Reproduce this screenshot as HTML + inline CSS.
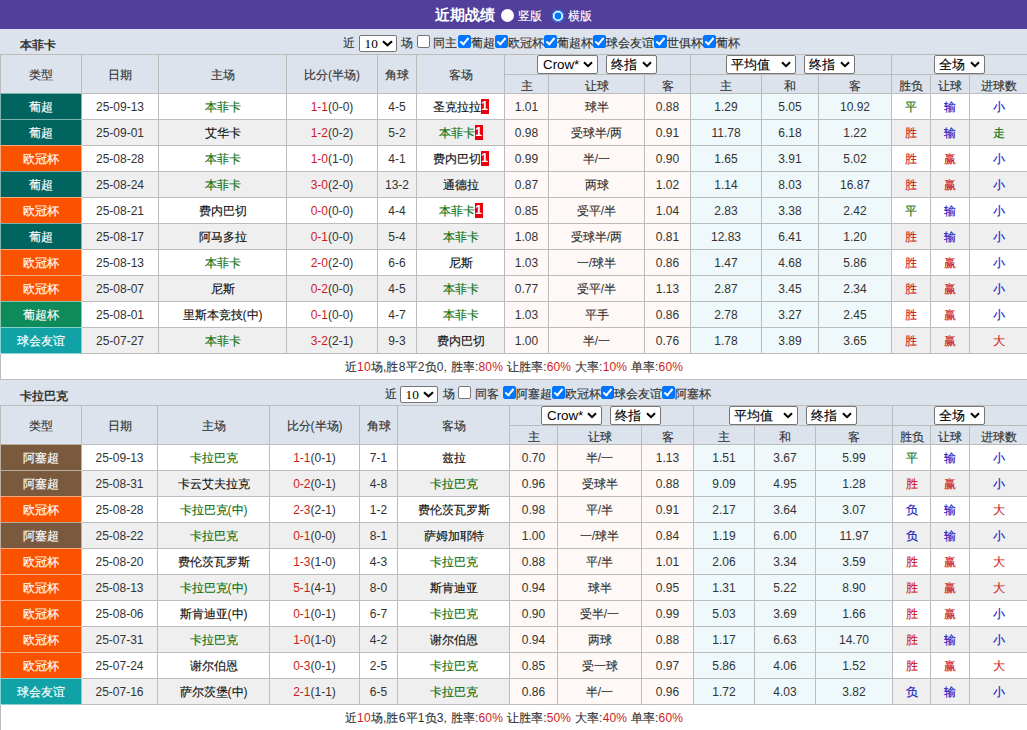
<!DOCTYPE html><html><head><meta charset="utf-8"><style>

html,body{margin:0;padding:0;}
body{width:1027px;height:730px;overflow:hidden;position:relative;background:#dce3ed;font-family:"Liberation Sans",sans-serif;font-size:12px;color:#333;}
.a{position:absolute;box-sizing:border-box;}
.k{-webkit-text-stroke:0.15px currentColor;}
.tname .k,.ttl .k{-webkit-text-stroke:0;}
.c{display:block;text-align:center;line-height:25px;white-space:nowrap;position:relative;top:1px;}
.h{color:#333;}
.tw{color:#fff;}
.tname{font-weight:bold;color:#333;font-size:12px;line-height:14px;}
.ctl{white-space:nowrap;line-height:12px;color:#333;}
.cb{width:13px;height:13px;border:1px solid #767676;border-radius:2px;background:#fff;}
.cb.on{background:#0075ff;border-color:#0075ff;}
.cb.on:after{content:"";position:absolute;left:2.5px;top:-0.5px;width:3px;height:7px;border:solid #fff;border-width:0 2px 2px 0;transform:rotate(40deg);}
.sel10{width:38px;height:17px;border:1px solid #767676;border-radius:2px;background:#fff;color:#000;}
.st10{position:absolute;left:4.5px;top:0.5px;font-family:"Liberation Serif",serif;font-size:13.33px;line-height:14px;}
.chev10{position:absolute;left:21.5px;top:3.5px;}
.sel{position:absolute;height:17px;border:1px solid #767676;border-radius:2px;background:#fff;font-size:13.33px;line-height:15px;color:#000;}
.st{position:absolute;left:5px;top:1px;}
.chev{position:absolute;right:4px;top:4.5px;}
.bd{display:inline-block;background:#e8000b;color:#fff;font-weight:bold;width:8px;height:15px;line-height:15px;text-align:center;vertical-align:1.5px;font-size:12px;}
.top{position:absolute;left:0;top:0;width:1027px;height:29px;background:#523f9c;border-bottom:1px solid #e2ddff;}
.ttl{position:absolute;left:435px;top:6px;color:#fff;font-weight:bold;font-size:15px;line-height:18px;}
.rd{position:absolute;top:9px;width:13px;height:13px;border-radius:50%;background:#fff;}
.rd.on{width:12px;height:12px;top:10px;background:#0075ff;box-shadow:inset 0 0 0 1px #0075ff, inset 0 0 0 2.6px #fff;}
.rt{position:absolute;top:9px;color:#fff;font-size:12px;line-height:14px;}

</style></head><body>
<div class="top"></div><div class="ttl"><span class="k">近期战绩</span></div>
<div class="rd" style="left:501px"></div><div class="rt" style="left:518px"><span class="k">竖版</span></div>
<div class="rd on" style="left:552px"></div><div class="rt" style="left:568px"><span class="k">横版</span></div>
<div class="a tname" style="left:20px;top:38px;"><span class="k">本菲卡</span></div>
<div class="a ctl" style="left:343px;top:37px;"><span class="k">近</span></div>
<div class="a sel10" style="left:359px;top:35px;"><span class="st10">10</span><svg class="chev10" width="12" height="7" viewBox="0 0 12 7"><path d="M1 1.2 L5.5 5.3 L10 1.2" fill="none" stroke="#000" stroke-width="2.1"/></svg></div>
<div class="a ctl" style="left:401px;top:37px;"><span class="k">场</span></div>
<div class="a cb" style="left:417px;top:35px;"></div>
<div class="a ctl" style="left:433px;top:37px;"><span class="k">同主</span></div>
<div class="a cb on" style="left:458px;top:35px;"></div>
<div class="a ctl" style="left:471px;top:37px;"><span class="k">葡超</span></div>
<div class="a cb on" style="left:495px;top:35px;"></div>
<div class="a ctl" style="left:508px;top:37px;"><span class="k">欧冠杯</span></div>
<div class="a cb on" style="left:544px;top:35px;"></div>
<div class="a ctl" style="left:557px;top:37px;"><span class="k">葡超杯</span></div>
<div class="a cb on" style="left:593px;top:35px;"></div>
<div class="a ctl" style="left:606px;top:37px;"><span class="k">球会友谊</span></div>
<div class="a cb on" style="left:654px;top:35px;"></div>
<div class="a ctl" style="left:667px;top:37px;"><span class="k">世俱杯</span></div>
<div class="a cb on" style="left:703px;top:35px;"></div>
<div class="a ctl" style="left:716px;top:37px;"><span class="k">葡杯</span></div>
<div class="a" style="left:0px;top:54px;width:1027px;height:326px;background:#bcbcbc;"></div>
<div class="a" style="left:1px;top:55px;width:80px;height:38px;background:#dce3ed;"><span class="c h" style="line-height:38px;top:1px"><span class="k">类型</span></span></div>
<div class="a" style="left:82px;top:55px;width:76px;height:38px;background:#dce3ed;"><span class="c h" style="line-height:38px;top:1px"><span class="k">日期</span></span></div>
<div class="a" style="left:159px;top:55px;width:127px;height:38px;background:#dce3ed;"><span class="c h" style="line-height:38px;top:1px"><span class="k">主场</span></span></div>
<div class="a" style="left:287px;top:55px;width:90px;height:38px;background:#dce3ed;"><span class="c h" style="line-height:38px;top:1px"><span class="k">比分</span>(<span class="k">半场</span>)</span></div>
<div class="a" style="left:378px;top:55px;width:38px;height:38px;background:#dce3ed;"><span class="c h" style="line-height:38px;top:1px"><span class="k">角球</span></span></div>
<div class="a" style="left:417px;top:55px;width:87px;height:38px;background:#dce3ed;"><span class="c h" style="line-height:38px;top:1px"><span class="k">客场</span></span></div>
<div class="a" style="left:505px;top:55px;width:185px;height:19px;background:#dce3ed;"></div>
<div class="a" style="left:505px;top:75px;width:43px;height:18px;background:#dce3ed;"><span class="c h" style="line-height:18px;top:2px"><span class="k">主</span></span></div>
<div class="a" style="left:549px;top:75px;width:95px;height:18px;background:#dce3ed;"><span class="c h" style="line-height:18px;top:2px"><span class="k">让球</span></span></div>
<div class="a" style="left:645px;top:75px;width:45px;height:18px;background:#dce3ed;"><span class="c h" style="line-height:18px;top:2px"><span class="k">客</span></span></div>
<div class="a" style="left:691px;top:55px;width:200px;height:19px;background:#dce3ed;"></div>
<div class="a" style="left:691px;top:75px;width:70px;height:18px;background:#dce3ed;"><span class="c h" style="line-height:18px;top:2px"><span class="k">主</span></span></div>
<div class="a" style="left:762px;top:75px;width:56px;height:18px;background:#dce3ed;"><span class="c h" style="line-height:18px;top:2px"><span class="k">和</span></span></div>
<div class="a" style="left:819px;top:75px;width:72px;height:18px;background:#dce3ed;"><span class="c h" style="line-height:18px;top:2px"><span class="k">客</span></span></div>
<div class="a" style="left:892px;top:55px;width:136px;height:19px;background:#dce3ed;"></div>
<div class="a" style="left:892px;top:75px;width:38px;height:18px;background:#dce3ed;"><span class="c h" style="line-height:18px;top:2px"><span class="k">胜负</span></span></div>
<div class="a" style="left:931px;top:75px;width:38px;height:18px;background:#dce3ed;"><span class="c h" style="line-height:18px;top:2px"><span class="k">让球</span></span></div>
<div class="a" style="left:970px;top:75px;width:58px;height:18px;background:#dce3ed;"><span class="c h" style="line-height:18px;top:2px"><span class="k">进球数</span></span></div>
<div class="a" style="left:0px;top:93px;width:82px;height:27px;background:#01645f;box-shadow:inset 1px 1px 0 rgba(255,255,255,.5),inset -1px -1px 0 rgba(255,255,255,.5);"><span class="c tw" style="top:2px"><span class="k">葡超</span></span></div>
<div class="a" style="left:82px;top:94px;width:76px;height:25px;background:#ffffff;"><span class="c">25-09-13</span></div>
<div class="a" style="left:159px;top:94px;width:127px;height:25px;background:#ffffff;"><span class="c" style="color:#0d700d"><span class="k">本菲卡</span></span></div>
<div class="a" style="left:417px;top:94px;width:87px;height:25px;background:#ffffff;"><span class="c" style="color:#111"><span class="k">圣克拉拉</span><b class="bd">1</b></span></div>
<div class="a" style="left:287px;top:94px;width:90px;height:25px;background:#ffffff;"><span class="c"><span style="color:#cc1c1c">1-1</span>(0-0)</span></div>
<div class="a" style="left:378px;top:94px;width:38px;height:25px;background:#ffffff;"><span class="c">4-5</span></div>
<div class="a" style="left:505px;top:94px;width:43px;height:25px;background:#fef9f7;"><span class="c">1.01</span></div>
<div class="a" style="left:549px;top:94px;width:95px;height:25px;background:#fef9f7;"><span class="c"><span class="k">球半</span></span></div>
<div class="a" style="left:645px;top:94px;width:45px;height:25px;background:#fef9f7;"><span class="c">0.88</span></div>
<div class="a" style="left:691px;top:94px;width:70px;height:25px;background:#eff8fb;"><span class="c">1.29</span></div>
<div class="a" style="left:762px;top:94px;width:56px;height:25px;background:#eff8fb;"><span class="c">5.05</span></div>
<div class="a" style="left:819px;top:94px;width:72px;height:25px;background:#eff8fb;"><span class="c">10.92</span></div>
<div class="a" style="left:892px;top:94px;width:38px;height:25px;background:#ffffff;"><span class="c" style="color:#0d700d"><span class="k">平</span></span></div>
<div class="a" style="left:931px;top:94px;width:38px;height:25px;background:#ffffff;"><span class="c" style="color:#1414c0"><span class="k">输</span></span></div>
<div class="a" style="left:970px;top:94px;width:58px;height:25px;background:#ffffff;"><span class="c" style="color:#1414c0"><span class="k">小</span></span></div>
<div class="a" style="left:0px;top:119px;width:82px;height:27px;background:#01645f;box-shadow:inset 1px 1px 0 rgba(255,255,255,.5),inset -1px -1px 0 rgba(255,255,255,.5);"><span class="c tw" style="top:2px"><span class="k">葡超</span></span></div>
<div class="a" style="left:82px;top:120px;width:76px;height:25px;background:#efefef;"><span class="c">25-09-01</span></div>
<div class="a" style="left:159px;top:120px;width:127px;height:25px;background:#efefef;"><span class="c" style="color:#111"><span class="k">艾华卡</span></span></div>
<div class="a" style="left:417px;top:120px;width:87px;height:25px;background:#efefef;"><span class="c" style="color:#0d700d"><span class="k">本菲卡</span><b class="bd">1</b></span></div>
<div class="a" style="left:287px;top:120px;width:90px;height:25px;background:#efefef;"><span class="c"><span style="color:#cc1c1c">1-2</span>(0-2)</span></div>
<div class="a" style="left:378px;top:120px;width:38px;height:25px;background:#efefef;"><span class="c">5-2</span></div>
<div class="a" style="left:505px;top:120px;width:43px;height:25px;background:#fef9f7;"><span class="c">0.98</span></div>
<div class="a" style="left:549px;top:120px;width:95px;height:25px;background:#fef9f7;"><span class="c"><span class="k">受球半</span>/<span class="k">两</span></span></div>
<div class="a" style="left:645px;top:120px;width:45px;height:25px;background:#fef9f7;"><span class="c">0.91</span></div>
<div class="a" style="left:691px;top:120px;width:70px;height:25px;background:#eff8fb;"><span class="c">11.78</span></div>
<div class="a" style="left:762px;top:120px;width:56px;height:25px;background:#eff8fb;"><span class="c">6.18</span></div>
<div class="a" style="left:819px;top:120px;width:72px;height:25px;background:#eff8fb;"><span class="c">1.22</span></div>
<div class="a" style="left:892px;top:120px;width:38px;height:25px;background:#efefef;"><span class="c" style="color:#cc1c1c"><span class="k">胜</span></span></div>
<div class="a" style="left:931px;top:120px;width:38px;height:25px;background:#efefef;"><span class="c" style="color:#1414c0"><span class="k">输</span></span></div>
<div class="a" style="left:970px;top:120px;width:58px;height:25px;background:#efefef;"><span class="c" style="color:#0d700d"><span class="k">走</span></span></div>
<div class="a" style="left:0px;top:145px;width:82px;height:27px;background:#fb5200;box-shadow:inset 1px 1px 0 rgba(255,255,255,.5),inset -1px -1px 0 rgba(255,255,255,.5);"><span class="c tw" style="top:2px"><span class="k">欧冠杯</span></span></div>
<div class="a" style="left:82px;top:146px;width:76px;height:25px;background:#ffffff;"><span class="c">25-08-28</span></div>
<div class="a" style="left:159px;top:146px;width:127px;height:25px;background:#ffffff;"><span class="c" style="color:#0d700d"><span class="k">本菲卡</span></span></div>
<div class="a" style="left:417px;top:146px;width:87px;height:25px;background:#ffffff;"><span class="c" style="color:#111"><span class="k">费内巴切</span><b class="bd">1</b></span></div>
<div class="a" style="left:287px;top:146px;width:90px;height:25px;background:#ffffff;"><span class="c"><span style="color:#cc1c1c">1-0</span>(1-0)</span></div>
<div class="a" style="left:378px;top:146px;width:38px;height:25px;background:#ffffff;"><span class="c">4-1</span></div>
<div class="a" style="left:505px;top:146px;width:43px;height:25px;background:#fef9f7;"><span class="c">0.99</span></div>
<div class="a" style="left:549px;top:146px;width:95px;height:25px;background:#fef9f7;"><span class="c"><span class="k">半</span>/<span class="k">一</span></span></div>
<div class="a" style="left:645px;top:146px;width:45px;height:25px;background:#fef9f7;"><span class="c">0.90</span></div>
<div class="a" style="left:691px;top:146px;width:70px;height:25px;background:#eff8fb;"><span class="c">1.65</span></div>
<div class="a" style="left:762px;top:146px;width:56px;height:25px;background:#eff8fb;"><span class="c">3.91</span></div>
<div class="a" style="left:819px;top:146px;width:72px;height:25px;background:#eff8fb;"><span class="c">5.02</span></div>
<div class="a" style="left:892px;top:146px;width:38px;height:25px;background:#ffffff;"><span class="c" style="color:#cc1c1c"><span class="k">胜</span></span></div>
<div class="a" style="left:931px;top:146px;width:38px;height:25px;background:#ffffff;"><span class="c" style="color:#cc1c1c"><span class="k">赢</span></span></div>
<div class="a" style="left:970px;top:146px;width:58px;height:25px;background:#ffffff;"><span class="c" style="color:#1414c0"><span class="k">小</span></span></div>
<div class="a" style="left:0px;top:171px;width:82px;height:27px;background:#01645f;box-shadow:inset 1px 1px 0 rgba(255,255,255,.5),inset -1px -1px 0 rgba(255,255,255,.5);"><span class="c tw" style="top:2px"><span class="k">葡超</span></span></div>
<div class="a" style="left:82px;top:172px;width:76px;height:25px;background:#efefef;"><span class="c">25-08-24</span></div>
<div class="a" style="left:159px;top:172px;width:127px;height:25px;background:#efefef;"><span class="c" style="color:#0d700d"><span class="k">本菲卡</span></span></div>
<div class="a" style="left:417px;top:172px;width:87px;height:25px;background:#efefef;"><span class="c" style="color:#111"><span class="k">通德拉</span></span></div>
<div class="a" style="left:287px;top:172px;width:90px;height:25px;background:#efefef;"><span class="c"><span style="color:#cc1c1c">3-0</span>(2-0)</span></div>
<div class="a" style="left:378px;top:172px;width:38px;height:25px;background:#efefef;"><span class="c">13-2</span></div>
<div class="a" style="left:505px;top:172px;width:43px;height:25px;background:#fef9f7;"><span class="c">0.87</span></div>
<div class="a" style="left:549px;top:172px;width:95px;height:25px;background:#fef9f7;"><span class="c"><span class="k">两球</span></span></div>
<div class="a" style="left:645px;top:172px;width:45px;height:25px;background:#fef9f7;"><span class="c">1.02</span></div>
<div class="a" style="left:691px;top:172px;width:70px;height:25px;background:#eff8fb;"><span class="c">1.14</span></div>
<div class="a" style="left:762px;top:172px;width:56px;height:25px;background:#eff8fb;"><span class="c">8.03</span></div>
<div class="a" style="left:819px;top:172px;width:72px;height:25px;background:#eff8fb;"><span class="c">16.87</span></div>
<div class="a" style="left:892px;top:172px;width:38px;height:25px;background:#efefef;"><span class="c" style="color:#cc1c1c"><span class="k">胜</span></span></div>
<div class="a" style="left:931px;top:172px;width:38px;height:25px;background:#efefef;"><span class="c" style="color:#cc1c1c"><span class="k">赢</span></span></div>
<div class="a" style="left:970px;top:172px;width:58px;height:25px;background:#efefef;"><span class="c" style="color:#1414c0"><span class="k">小</span></span></div>
<div class="a" style="left:0px;top:197px;width:82px;height:27px;background:#fb5200;box-shadow:inset 1px 1px 0 rgba(255,255,255,.5),inset -1px -1px 0 rgba(255,255,255,.5);"><span class="c tw" style="top:2px"><span class="k">欧冠杯</span></span></div>
<div class="a" style="left:82px;top:198px;width:76px;height:25px;background:#ffffff;"><span class="c">25-08-21</span></div>
<div class="a" style="left:159px;top:198px;width:127px;height:25px;background:#ffffff;"><span class="c" style="color:#111"><span class="k">费内巴切</span></span></div>
<div class="a" style="left:417px;top:198px;width:87px;height:25px;background:#ffffff;"><span class="c" style="color:#0d700d"><span class="k">本菲卡</span><b class="bd">1</b></span></div>
<div class="a" style="left:287px;top:198px;width:90px;height:25px;background:#ffffff;"><span class="c"><span style="color:#cc1c1c">0-0</span>(0-0)</span></div>
<div class="a" style="left:378px;top:198px;width:38px;height:25px;background:#ffffff;"><span class="c">4-4</span></div>
<div class="a" style="left:505px;top:198px;width:43px;height:25px;background:#fef9f7;"><span class="c">0.85</span></div>
<div class="a" style="left:549px;top:198px;width:95px;height:25px;background:#fef9f7;"><span class="c"><span class="k">受平</span>/<span class="k">半</span></span></div>
<div class="a" style="left:645px;top:198px;width:45px;height:25px;background:#fef9f7;"><span class="c">1.04</span></div>
<div class="a" style="left:691px;top:198px;width:70px;height:25px;background:#eff8fb;"><span class="c">2.83</span></div>
<div class="a" style="left:762px;top:198px;width:56px;height:25px;background:#eff8fb;"><span class="c">3.38</span></div>
<div class="a" style="left:819px;top:198px;width:72px;height:25px;background:#eff8fb;"><span class="c">2.42</span></div>
<div class="a" style="left:892px;top:198px;width:38px;height:25px;background:#ffffff;"><span class="c" style="color:#0d700d"><span class="k">平</span></span></div>
<div class="a" style="left:931px;top:198px;width:38px;height:25px;background:#ffffff;"><span class="c" style="color:#1414c0"><span class="k">输</span></span></div>
<div class="a" style="left:970px;top:198px;width:58px;height:25px;background:#ffffff;"><span class="c" style="color:#1414c0"><span class="k">小</span></span></div>
<div class="a" style="left:0px;top:223px;width:82px;height:27px;background:#01645f;box-shadow:inset 1px 1px 0 rgba(255,255,255,.5),inset -1px -1px 0 rgba(255,255,255,.5);"><span class="c tw" style="top:2px"><span class="k">葡超</span></span></div>
<div class="a" style="left:82px;top:224px;width:76px;height:25px;background:#efefef;"><span class="c">25-08-17</span></div>
<div class="a" style="left:159px;top:224px;width:127px;height:25px;background:#efefef;"><span class="c" style="color:#111"><span class="k">阿马多拉</span></span></div>
<div class="a" style="left:417px;top:224px;width:87px;height:25px;background:#efefef;"><span class="c" style="color:#0d700d"><span class="k">本菲卡</span></span></div>
<div class="a" style="left:287px;top:224px;width:90px;height:25px;background:#efefef;"><span class="c"><span style="color:#cc1c1c">0-1</span>(0-0)</span></div>
<div class="a" style="left:378px;top:224px;width:38px;height:25px;background:#efefef;"><span class="c">5-4</span></div>
<div class="a" style="left:505px;top:224px;width:43px;height:25px;background:#fef9f7;"><span class="c">1.08</span></div>
<div class="a" style="left:549px;top:224px;width:95px;height:25px;background:#fef9f7;"><span class="c"><span class="k">受球半</span>/<span class="k">两</span></span></div>
<div class="a" style="left:645px;top:224px;width:45px;height:25px;background:#fef9f7;"><span class="c">0.81</span></div>
<div class="a" style="left:691px;top:224px;width:70px;height:25px;background:#eff8fb;"><span class="c">12.83</span></div>
<div class="a" style="left:762px;top:224px;width:56px;height:25px;background:#eff8fb;"><span class="c">6.41</span></div>
<div class="a" style="left:819px;top:224px;width:72px;height:25px;background:#eff8fb;"><span class="c">1.20</span></div>
<div class="a" style="left:892px;top:224px;width:38px;height:25px;background:#efefef;"><span class="c" style="color:#cc1c1c"><span class="k">胜</span></span></div>
<div class="a" style="left:931px;top:224px;width:38px;height:25px;background:#efefef;"><span class="c" style="color:#1414c0"><span class="k">输</span></span></div>
<div class="a" style="left:970px;top:224px;width:58px;height:25px;background:#efefef;"><span class="c" style="color:#1414c0"><span class="k">小</span></span></div>
<div class="a" style="left:0px;top:249px;width:82px;height:27px;background:#fb5200;box-shadow:inset 1px 1px 0 rgba(255,255,255,.5),inset -1px -1px 0 rgba(255,255,255,.5);"><span class="c tw" style="top:2px"><span class="k">欧冠杯</span></span></div>
<div class="a" style="left:82px;top:250px;width:76px;height:25px;background:#ffffff;"><span class="c">25-08-13</span></div>
<div class="a" style="left:159px;top:250px;width:127px;height:25px;background:#ffffff;"><span class="c" style="color:#0d700d"><span class="k">本菲卡</span></span></div>
<div class="a" style="left:417px;top:250px;width:87px;height:25px;background:#ffffff;"><span class="c" style="color:#111"><span class="k">尼斯</span></span></div>
<div class="a" style="left:287px;top:250px;width:90px;height:25px;background:#ffffff;"><span class="c"><span style="color:#cc1c1c">2-0</span>(2-0)</span></div>
<div class="a" style="left:378px;top:250px;width:38px;height:25px;background:#ffffff;"><span class="c">6-6</span></div>
<div class="a" style="left:505px;top:250px;width:43px;height:25px;background:#fef9f7;"><span class="c">1.03</span></div>
<div class="a" style="left:549px;top:250px;width:95px;height:25px;background:#fef9f7;"><span class="c"><span class="k">一</span>/<span class="k">球半</span></span></div>
<div class="a" style="left:645px;top:250px;width:45px;height:25px;background:#fef9f7;"><span class="c">0.86</span></div>
<div class="a" style="left:691px;top:250px;width:70px;height:25px;background:#eff8fb;"><span class="c">1.47</span></div>
<div class="a" style="left:762px;top:250px;width:56px;height:25px;background:#eff8fb;"><span class="c">4.68</span></div>
<div class="a" style="left:819px;top:250px;width:72px;height:25px;background:#eff8fb;"><span class="c">5.86</span></div>
<div class="a" style="left:892px;top:250px;width:38px;height:25px;background:#ffffff;"><span class="c" style="color:#cc1c1c"><span class="k">胜</span></span></div>
<div class="a" style="left:931px;top:250px;width:38px;height:25px;background:#ffffff;"><span class="c" style="color:#cc1c1c"><span class="k">赢</span></span></div>
<div class="a" style="left:970px;top:250px;width:58px;height:25px;background:#ffffff;"><span class="c" style="color:#1414c0"><span class="k">小</span></span></div>
<div class="a" style="left:0px;top:275px;width:82px;height:27px;background:#fb5200;box-shadow:inset 1px 1px 0 rgba(255,255,255,.5),inset -1px -1px 0 rgba(255,255,255,.5);"><span class="c tw" style="top:2px"><span class="k">欧冠杯</span></span></div>
<div class="a" style="left:82px;top:276px;width:76px;height:25px;background:#efefef;"><span class="c">25-08-07</span></div>
<div class="a" style="left:159px;top:276px;width:127px;height:25px;background:#efefef;"><span class="c" style="color:#111"><span class="k">尼斯</span></span></div>
<div class="a" style="left:417px;top:276px;width:87px;height:25px;background:#efefef;"><span class="c" style="color:#0d700d"><span class="k">本菲卡</span></span></div>
<div class="a" style="left:287px;top:276px;width:90px;height:25px;background:#efefef;"><span class="c"><span style="color:#cc1c1c">0-2</span>(0-0)</span></div>
<div class="a" style="left:378px;top:276px;width:38px;height:25px;background:#efefef;"><span class="c">4-5</span></div>
<div class="a" style="left:505px;top:276px;width:43px;height:25px;background:#fef9f7;"><span class="c">0.77</span></div>
<div class="a" style="left:549px;top:276px;width:95px;height:25px;background:#fef9f7;"><span class="c"><span class="k">受平</span>/<span class="k">半</span></span></div>
<div class="a" style="left:645px;top:276px;width:45px;height:25px;background:#fef9f7;"><span class="c">1.13</span></div>
<div class="a" style="left:691px;top:276px;width:70px;height:25px;background:#eff8fb;"><span class="c">2.87</span></div>
<div class="a" style="left:762px;top:276px;width:56px;height:25px;background:#eff8fb;"><span class="c">3.45</span></div>
<div class="a" style="left:819px;top:276px;width:72px;height:25px;background:#eff8fb;"><span class="c">2.34</span></div>
<div class="a" style="left:892px;top:276px;width:38px;height:25px;background:#efefef;"><span class="c" style="color:#cc1c1c"><span class="k">胜</span></span></div>
<div class="a" style="left:931px;top:276px;width:38px;height:25px;background:#efefef;"><span class="c" style="color:#cc1c1c"><span class="k">赢</span></span></div>
<div class="a" style="left:970px;top:276px;width:58px;height:25px;background:#efefef;"><span class="c" style="color:#1414c0"><span class="k">小</span></span></div>
<div class="a" style="left:0px;top:301px;width:82px;height:27px;background:#0f8a5a;box-shadow:inset 1px 1px 0 rgba(255,255,255,.5),inset -1px -1px 0 rgba(255,255,255,.5);"><span class="c tw" style="top:2px"><span class="k">葡超杯</span></span></div>
<div class="a" style="left:82px;top:302px;width:76px;height:25px;background:#ffffff;"><span class="c">25-08-01</span></div>
<div class="a" style="left:159px;top:302px;width:127px;height:25px;background:#ffffff;"><span class="c" style="color:#111"><span class="k">里斯本竞技</span>(<span class="k">中</span>)</span></div>
<div class="a" style="left:417px;top:302px;width:87px;height:25px;background:#ffffff;"><span class="c" style="color:#0d700d"><span class="k">本菲卡</span></span></div>
<div class="a" style="left:287px;top:302px;width:90px;height:25px;background:#ffffff;"><span class="c"><span style="color:#cc1c1c">0-1</span>(0-0)</span></div>
<div class="a" style="left:378px;top:302px;width:38px;height:25px;background:#ffffff;"><span class="c">4-7</span></div>
<div class="a" style="left:505px;top:302px;width:43px;height:25px;background:#fef9f7;"><span class="c">1.03</span></div>
<div class="a" style="left:549px;top:302px;width:95px;height:25px;background:#fef9f7;"><span class="c"><span class="k">平手</span></span></div>
<div class="a" style="left:645px;top:302px;width:45px;height:25px;background:#fef9f7;"><span class="c">0.86</span></div>
<div class="a" style="left:691px;top:302px;width:70px;height:25px;background:#eff8fb;"><span class="c">2.78</span></div>
<div class="a" style="left:762px;top:302px;width:56px;height:25px;background:#eff8fb;"><span class="c">3.27</span></div>
<div class="a" style="left:819px;top:302px;width:72px;height:25px;background:#eff8fb;"><span class="c">2.45</span></div>
<div class="a" style="left:892px;top:302px;width:38px;height:25px;background:#ffffff;"><span class="c" style="color:#cc1c1c"><span class="k">胜</span></span></div>
<div class="a" style="left:931px;top:302px;width:38px;height:25px;background:#ffffff;"><span class="c" style="color:#cc1c1c"><span class="k">赢</span></span></div>
<div class="a" style="left:970px;top:302px;width:58px;height:25px;background:#ffffff;"><span class="c" style="color:#1414c0"><span class="k">小</span></span></div>
<div class="a" style="left:0px;top:327px;width:82px;height:27px;background:#10a2a6;box-shadow:inset 1px 1px 0 rgba(255,255,255,.5),inset -1px -1px 0 rgba(255,255,255,.5);"><span class="c tw" style="top:2px"><span class="k">球会友谊</span></span></div>
<div class="a" style="left:82px;top:328px;width:76px;height:25px;background:#efefef;"><span class="c">25-07-27</span></div>
<div class="a" style="left:159px;top:328px;width:127px;height:25px;background:#efefef;"><span class="c" style="color:#0d700d"><span class="k">本菲卡</span></span></div>
<div class="a" style="left:417px;top:328px;width:87px;height:25px;background:#efefef;"><span class="c" style="color:#111"><span class="k">费内巴切</span></span></div>
<div class="a" style="left:287px;top:328px;width:90px;height:25px;background:#efefef;"><span class="c"><span style="color:#cc1c1c">3-2</span>(2-1)</span></div>
<div class="a" style="left:378px;top:328px;width:38px;height:25px;background:#efefef;"><span class="c">9-3</span></div>
<div class="a" style="left:505px;top:328px;width:43px;height:25px;background:#fef9f7;"><span class="c">1.00</span></div>
<div class="a" style="left:549px;top:328px;width:95px;height:25px;background:#fef9f7;"><span class="c"><span class="k">半</span>/<span class="k">一</span></span></div>
<div class="a" style="left:645px;top:328px;width:45px;height:25px;background:#fef9f7;"><span class="c">0.76</span></div>
<div class="a" style="left:691px;top:328px;width:70px;height:25px;background:#eff8fb;"><span class="c">1.78</span></div>
<div class="a" style="left:762px;top:328px;width:56px;height:25px;background:#eff8fb;"><span class="c">3.89</span></div>
<div class="a" style="left:819px;top:328px;width:72px;height:25px;background:#eff8fb;"><span class="c">3.65</span></div>
<div class="a" style="left:892px;top:328px;width:38px;height:25px;background:#efefef;"><span class="c" style="color:#cc1c1c"><span class="k">胜</span></span></div>
<div class="a" style="left:931px;top:328px;width:38px;height:25px;background:#efefef;"><span class="c" style="color:#cc1c1c"><span class="k">赢</span></span></div>
<div class="a" style="left:970px;top:328px;width:58px;height:25px;background:#efefef;"><span class="c" style="color:#cc1c1c"><span class="k">大</span></span></div>
<div class="a" style="left:1px;top:354px;width:1026px;height:25px;background:#ffffff;"><span class="c" style="letter-spacing:0.18px"><span class="k">近</span><span style="color:#cc1c1c">10</span><span class="k">场</span>,<span class="k">胜</span>8<span class="k">平</span>2<span class="k">负</span>0, <span class="k">胜率</span>:<span style="color:#cc1c1c">80%</span> <span class="k">让胜率</span>:<span style="color:#cc1c1c">60%</span> <span class="k">大率</span>:<span style="color:#cc1c1c">10%</span> <span class="k">单率</span>:<span style="color:#cc1c1c">60%</span></span></div>
<div class="a tname" style="left:20px;top:389px;"><span class="k">卡拉巴克</span></div>
<div class="a ctl" style="left:385px;top:388px;"><span class="k">近</span></div>
<div class="a sel10" style="left:400px;top:386px;"><span class="st10">10</span><svg class="chev10" width="12" height="7" viewBox="0 0 12 7"><path d="M1 1.2 L5.5 5.3 L10 1.2" fill="none" stroke="#000" stroke-width="2.1"/></svg></div>
<div class="a ctl" style="left:443px;top:388px;"><span class="k">场</span></div>
<div class="a cb" style="left:458px;top:386px;"></div>
<div class="a ctl" style="left:475px;top:388px;"><span class="k">同客</span></div>
<div class="a cb on" style="left:503px;top:386px;"></div>
<div class="a ctl" style="left:516px;top:388px;"><span class="k">阿塞超</span></div>
<div class="a cb on" style="left:552px;top:386px;"></div>
<div class="a ctl" style="left:565px;top:388px;"><span class="k">欧冠杯</span></div>
<div class="a cb on" style="left:601px;top:386px;"></div>
<div class="a ctl" style="left:614px;top:388px;"><span class="k">球会友谊</span></div>
<div class="a cb on" style="left:662px;top:386px;"></div>
<div class="a ctl" style="left:675px;top:388px;"><span class="k">阿塞杯</span></div>
<div class="a" style="left:0px;top:405px;width:1027px;height:326px;background:#bcbcbc;"></div>
<div class="a" style="left:1px;top:406px;width:80px;height:38px;background:#dce3ed;"><span class="c h" style="line-height:38px;top:1px"><span class="k">类型</span></span></div>
<div class="a" style="left:82px;top:406px;width:75px;height:38px;background:#dce3ed;"><span class="c h" style="line-height:38px;top:1px"><span class="k">日期</span></span></div>
<div class="a" style="left:158px;top:406px;width:111px;height:38px;background:#dce3ed;"><span class="c h" style="line-height:38px;top:1px"><span class="k">主场</span></span></div>
<div class="a" style="left:270px;top:406px;width:89px;height:38px;background:#dce3ed;"><span class="c h" style="line-height:38px;top:1px"><span class="k">比分</span>(<span class="k">半场</span>)</span></div>
<div class="a" style="left:360px;top:406px;width:37px;height:38px;background:#dce3ed;"><span class="c h" style="line-height:38px;top:1px"><span class="k">角球</span></span></div>
<div class="a" style="left:398px;top:406px;width:111px;height:38px;background:#dce3ed;"><span class="c h" style="line-height:38px;top:1px"><span class="k">客场</span></span></div>
<div class="a" style="left:510px;top:406px;width:183px;height:19px;background:#dce3ed;"></div>
<div class="a" style="left:510px;top:426px;width:47px;height:18px;background:#dce3ed;"><span class="c h" style="line-height:18px;top:2px"><span class="k">主</span></span></div>
<div class="a" style="left:558px;top:426px;width:83px;height:18px;background:#dce3ed;"><span class="c h" style="line-height:18px;top:2px"><span class="k">让球</span></span></div>
<div class="a" style="left:642px;top:426px;width:51px;height:18px;background:#dce3ed;"><span class="c h" style="line-height:18px;top:2px"><span class="k">客</span></span></div>
<div class="a" style="left:694px;top:406px;width:198px;height:19px;background:#dce3ed;"></div>
<div class="a" style="left:694px;top:426px;width:60px;height:18px;background:#dce3ed;"><span class="c h" style="line-height:18px;top:2px"><span class="k">主</span></span></div>
<div class="a" style="left:755px;top:426px;width:60px;height:18px;background:#dce3ed;"><span class="c h" style="line-height:18px;top:2px"><span class="k">和</span></span></div>
<div class="a" style="left:816px;top:426px;width:76px;height:18px;background:#dce3ed;"><span class="c h" style="line-height:18px;top:2px"><span class="k">客</span></span></div>
<div class="a" style="left:893px;top:406px;width:135px;height:19px;background:#dce3ed;"></div>
<div class="a" style="left:893px;top:426px;width:37px;height:18px;background:#dce3ed;"><span class="c h" style="line-height:18px;top:2px"><span class="k">胜负</span></span></div>
<div class="a" style="left:931px;top:426px;width:38px;height:18px;background:#dce3ed;"><span class="c h" style="line-height:18px;top:2px"><span class="k">让球</span></span></div>
<div class="a" style="left:970px;top:426px;width:58px;height:18px;background:#dce3ed;"><span class="c h" style="line-height:18px;top:2px"><span class="k">进球数</span></span></div>
<div class="a" style="left:0px;top:444px;width:82px;height:27px;background:#7a5a3e;box-shadow:inset 1px 1px 0 rgba(255,255,255,.5),inset -1px -1px 0 rgba(255,255,255,.5);"><span class="c tw" style="top:2px"><span class="k">阿塞超</span></span></div>
<div class="a" style="left:82px;top:445px;width:75px;height:25px;background:#ffffff;"><span class="c">25-09-13</span></div>
<div class="a" style="left:158px;top:445px;width:111px;height:25px;background:#ffffff;"><span class="c" style="color:#0d700d"><span class="k">卡拉巴克</span></span></div>
<div class="a" style="left:398px;top:445px;width:111px;height:25px;background:#ffffff;"><span class="c" style="color:#111"><span class="k">兹拉</span></span></div>
<div class="a" style="left:270px;top:445px;width:89px;height:25px;background:#ffffff;"><span class="c"><span style="color:#cc1c1c">1-1</span>(0-1)</span></div>
<div class="a" style="left:360px;top:445px;width:37px;height:25px;background:#ffffff;"><span class="c">7-1</span></div>
<div class="a" style="left:510px;top:445px;width:47px;height:25px;background:#fef9f7;"><span class="c">0.70</span></div>
<div class="a" style="left:558px;top:445px;width:83px;height:25px;background:#fef9f7;"><span class="c"><span class="k">半</span>/<span class="k">一</span></span></div>
<div class="a" style="left:642px;top:445px;width:51px;height:25px;background:#fef9f7;"><span class="c">1.13</span></div>
<div class="a" style="left:694px;top:445px;width:60px;height:25px;background:#eff8fb;"><span class="c">1.51</span></div>
<div class="a" style="left:755px;top:445px;width:60px;height:25px;background:#eff8fb;"><span class="c">3.67</span></div>
<div class="a" style="left:816px;top:445px;width:76px;height:25px;background:#eff8fb;"><span class="c">5.99</span></div>
<div class="a" style="left:893px;top:445px;width:37px;height:25px;background:#ffffff;"><span class="c" style="color:#0d700d"><span class="k">平</span></span></div>
<div class="a" style="left:931px;top:445px;width:38px;height:25px;background:#ffffff;"><span class="c" style="color:#1414c0"><span class="k">输</span></span></div>
<div class="a" style="left:970px;top:445px;width:58px;height:25px;background:#ffffff;"><span class="c" style="color:#1414c0"><span class="k">小</span></span></div>
<div class="a" style="left:0px;top:470px;width:82px;height:27px;background:#7a5a3e;box-shadow:inset 1px 1px 0 rgba(255,255,255,.5),inset -1px -1px 0 rgba(255,255,255,.5);"><span class="c tw" style="top:2px"><span class="k">阿塞超</span></span></div>
<div class="a" style="left:82px;top:471px;width:75px;height:25px;background:#efefef;"><span class="c">25-08-31</span></div>
<div class="a" style="left:158px;top:471px;width:111px;height:25px;background:#efefef;"><span class="c" style="color:#111"><span class="k">卡云艾夫拉克</span></span></div>
<div class="a" style="left:398px;top:471px;width:111px;height:25px;background:#efefef;"><span class="c" style="color:#0d700d"><span class="k">卡拉巴克</span></span></div>
<div class="a" style="left:270px;top:471px;width:89px;height:25px;background:#efefef;"><span class="c"><span style="color:#cc1c1c">0-2</span>(0-1)</span></div>
<div class="a" style="left:360px;top:471px;width:37px;height:25px;background:#efefef;"><span class="c">4-8</span></div>
<div class="a" style="left:510px;top:471px;width:47px;height:25px;background:#fef9f7;"><span class="c">0.96</span></div>
<div class="a" style="left:558px;top:471px;width:83px;height:25px;background:#fef9f7;"><span class="c"><span class="k">受球半</span></span></div>
<div class="a" style="left:642px;top:471px;width:51px;height:25px;background:#fef9f7;"><span class="c">0.88</span></div>
<div class="a" style="left:694px;top:471px;width:60px;height:25px;background:#eff8fb;"><span class="c">9.09</span></div>
<div class="a" style="left:755px;top:471px;width:60px;height:25px;background:#eff8fb;"><span class="c">4.95</span></div>
<div class="a" style="left:816px;top:471px;width:76px;height:25px;background:#eff8fb;"><span class="c">1.28</span></div>
<div class="a" style="left:893px;top:471px;width:37px;height:25px;background:#efefef;"><span class="c" style="color:#cc1c1c"><span class="k">胜</span></span></div>
<div class="a" style="left:931px;top:471px;width:38px;height:25px;background:#efefef;"><span class="c" style="color:#cc1c1c"><span class="k">赢</span></span></div>
<div class="a" style="left:970px;top:471px;width:58px;height:25px;background:#efefef;"><span class="c" style="color:#1414c0"><span class="k">小</span></span></div>
<div class="a" style="left:0px;top:496px;width:82px;height:27px;background:#fb5200;box-shadow:inset 1px 1px 0 rgba(255,255,255,.5),inset -1px -1px 0 rgba(255,255,255,.5);"><span class="c tw" style="top:2px"><span class="k">欧冠杯</span></span></div>
<div class="a" style="left:82px;top:497px;width:75px;height:25px;background:#ffffff;"><span class="c">25-08-28</span></div>
<div class="a" style="left:158px;top:497px;width:111px;height:25px;background:#ffffff;"><span class="c" style="color:#0d700d"><span class="k">卡拉巴克</span>(<span class="k">中</span>)</span></div>
<div class="a" style="left:398px;top:497px;width:111px;height:25px;background:#ffffff;"><span class="c" style="color:#111"><span class="k">费伦茨瓦罗斯</span></span></div>
<div class="a" style="left:270px;top:497px;width:89px;height:25px;background:#ffffff;"><span class="c"><span style="color:#cc1c1c">2-3</span>(2-1)</span></div>
<div class="a" style="left:360px;top:497px;width:37px;height:25px;background:#ffffff;"><span class="c">1-2</span></div>
<div class="a" style="left:510px;top:497px;width:47px;height:25px;background:#fef9f7;"><span class="c">0.98</span></div>
<div class="a" style="left:558px;top:497px;width:83px;height:25px;background:#fef9f7;"><span class="c"><span class="k">平</span>/<span class="k">半</span></span></div>
<div class="a" style="left:642px;top:497px;width:51px;height:25px;background:#fef9f7;"><span class="c">0.91</span></div>
<div class="a" style="left:694px;top:497px;width:60px;height:25px;background:#eff8fb;"><span class="c">2.17</span></div>
<div class="a" style="left:755px;top:497px;width:60px;height:25px;background:#eff8fb;"><span class="c">3.64</span></div>
<div class="a" style="left:816px;top:497px;width:76px;height:25px;background:#eff8fb;"><span class="c">3.07</span></div>
<div class="a" style="left:893px;top:497px;width:37px;height:25px;background:#ffffff;"><span class="c" style="color:#1414c0"><span class="k">负</span></span></div>
<div class="a" style="left:931px;top:497px;width:38px;height:25px;background:#ffffff;"><span class="c" style="color:#1414c0"><span class="k">输</span></span></div>
<div class="a" style="left:970px;top:497px;width:58px;height:25px;background:#ffffff;"><span class="c" style="color:#cc1c1c"><span class="k">大</span></span></div>
<div class="a" style="left:0px;top:522px;width:82px;height:27px;background:#7a5a3e;box-shadow:inset 1px 1px 0 rgba(255,255,255,.5),inset -1px -1px 0 rgba(255,255,255,.5);"><span class="c tw" style="top:2px"><span class="k">阿塞超</span></span></div>
<div class="a" style="left:82px;top:523px;width:75px;height:25px;background:#efefef;"><span class="c">25-08-22</span></div>
<div class="a" style="left:158px;top:523px;width:111px;height:25px;background:#efefef;"><span class="c" style="color:#0d700d"><span class="k">卡拉巴克</span></span></div>
<div class="a" style="left:398px;top:523px;width:111px;height:25px;background:#efefef;"><span class="c" style="color:#111"><span class="k">萨姆加耶特</span></span></div>
<div class="a" style="left:270px;top:523px;width:89px;height:25px;background:#efefef;"><span class="c"><span style="color:#cc1c1c">0-1</span>(0-0)</span></div>
<div class="a" style="left:360px;top:523px;width:37px;height:25px;background:#efefef;"><span class="c">8-1</span></div>
<div class="a" style="left:510px;top:523px;width:47px;height:25px;background:#fef9f7;"><span class="c">1.00</span></div>
<div class="a" style="left:558px;top:523px;width:83px;height:25px;background:#fef9f7;"><span class="c"><span class="k">一</span>/<span class="k">球半</span></span></div>
<div class="a" style="left:642px;top:523px;width:51px;height:25px;background:#fef9f7;"><span class="c">0.84</span></div>
<div class="a" style="left:694px;top:523px;width:60px;height:25px;background:#eff8fb;"><span class="c">1.19</span></div>
<div class="a" style="left:755px;top:523px;width:60px;height:25px;background:#eff8fb;"><span class="c">6.00</span></div>
<div class="a" style="left:816px;top:523px;width:76px;height:25px;background:#eff8fb;"><span class="c">11.97</span></div>
<div class="a" style="left:893px;top:523px;width:37px;height:25px;background:#efefef;"><span class="c" style="color:#1414c0"><span class="k">负</span></span></div>
<div class="a" style="left:931px;top:523px;width:38px;height:25px;background:#efefef;"><span class="c" style="color:#1414c0"><span class="k">输</span></span></div>
<div class="a" style="left:970px;top:523px;width:58px;height:25px;background:#efefef;"><span class="c" style="color:#1414c0"><span class="k">小</span></span></div>
<div class="a" style="left:0px;top:548px;width:82px;height:27px;background:#fb5200;box-shadow:inset 1px 1px 0 rgba(255,255,255,.5),inset -1px -1px 0 rgba(255,255,255,.5);"><span class="c tw" style="top:2px"><span class="k">欧冠杯</span></span></div>
<div class="a" style="left:82px;top:549px;width:75px;height:25px;background:#ffffff;"><span class="c">25-08-20</span></div>
<div class="a" style="left:158px;top:549px;width:111px;height:25px;background:#ffffff;"><span class="c" style="color:#111"><span class="k">费伦茨瓦罗斯</span></span></div>
<div class="a" style="left:398px;top:549px;width:111px;height:25px;background:#ffffff;"><span class="c" style="color:#0d700d"><span class="k">卡拉巴克</span></span></div>
<div class="a" style="left:270px;top:549px;width:89px;height:25px;background:#ffffff;"><span class="c"><span style="color:#cc1c1c">1-3</span>(1-0)</span></div>
<div class="a" style="left:360px;top:549px;width:37px;height:25px;background:#ffffff;"><span class="c">4-3</span></div>
<div class="a" style="left:510px;top:549px;width:47px;height:25px;background:#fef9f7;"><span class="c">0.88</span></div>
<div class="a" style="left:558px;top:549px;width:83px;height:25px;background:#fef9f7;"><span class="c"><span class="k">平</span>/<span class="k">半</span></span></div>
<div class="a" style="left:642px;top:549px;width:51px;height:25px;background:#fef9f7;"><span class="c">1.01</span></div>
<div class="a" style="left:694px;top:549px;width:60px;height:25px;background:#eff8fb;"><span class="c">2.06</span></div>
<div class="a" style="left:755px;top:549px;width:60px;height:25px;background:#eff8fb;"><span class="c">3.34</span></div>
<div class="a" style="left:816px;top:549px;width:76px;height:25px;background:#eff8fb;"><span class="c">3.59</span></div>
<div class="a" style="left:893px;top:549px;width:37px;height:25px;background:#ffffff;"><span class="c" style="color:#cc1c1c"><span class="k">胜</span></span></div>
<div class="a" style="left:931px;top:549px;width:38px;height:25px;background:#ffffff;"><span class="c" style="color:#cc1c1c"><span class="k">赢</span></span></div>
<div class="a" style="left:970px;top:549px;width:58px;height:25px;background:#ffffff;"><span class="c" style="color:#cc1c1c"><span class="k">大</span></span></div>
<div class="a" style="left:0px;top:574px;width:82px;height:27px;background:#fb5200;box-shadow:inset 1px 1px 0 rgba(255,255,255,.5),inset -1px -1px 0 rgba(255,255,255,.5);"><span class="c tw" style="top:2px"><span class="k">欧冠杯</span></span></div>
<div class="a" style="left:82px;top:575px;width:75px;height:25px;background:#efefef;"><span class="c">25-08-13</span></div>
<div class="a" style="left:158px;top:575px;width:111px;height:25px;background:#efefef;"><span class="c" style="color:#0d700d"><span class="k">卡拉巴克</span>(<span class="k">中</span>)</span></div>
<div class="a" style="left:398px;top:575px;width:111px;height:25px;background:#efefef;"><span class="c" style="color:#111"><span class="k">斯肯迪亚</span></span></div>
<div class="a" style="left:270px;top:575px;width:89px;height:25px;background:#efefef;"><span class="c"><span style="color:#cc1c1c">5-1</span>(4-1)</span></div>
<div class="a" style="left:360px;top:575px;width:37px;height:25px;background:#efefef;"><span class="c">8-0</span></div>
<div class="a" style="left:510px;top:575px;width:47px;height:25px;background:#fef9f7;"><span class="c">0.94</span></div>
<div class="a" style="left:558px;top:575px;width:83px;height:25px;background:#fef9f7;"><span class="c"><span class="k">球半</span></span></div>
<div class="a" style="left:642px;top:575px;width:51px;height:25px;background:#fef9f7;"><span class="c">0.95</span></div>
<div class="a" style="left:694px;top:575px;width:60px;height:25px;background:#eff8fb;"><span class="c">1.31</span></div>
<div class="a" style="left:755px;top:575px;width:60px;height:25px;background:#eff8fb;"><span class="c">5.22</span></div>
<div class="a" style="left:816px;top:575px;width:76px;height:25px;background:#eff8fb;"><span class="c">8.90</span></div>
<div class="a" style="left:893px;top:575px;width:37px;height:25px;background:#efefef;"><span class="c" style="color:#cc1c1c"><span class="k">胜</span></span></div>
<div class="a" style="left:931px;top:575px;width:38px;height:25px;background:#efefef;"><span class="c" style="color:#cc1c1c"><span class="k">赢</span></span></div>
<div class="a" style="left:970px;top:575px;width:58px;height:25px;background:#efefef;"><span class="c" style="color:#cc1c1c"><span class="k">大</span></span></div>
<div class="a" style="left:0px;top:600px;width:82px;height:27px;background:#fb5200;box-shadow:inset 1px 1px 0 rgba(255,255,255,.5),inset -1px -1px 0 rgba(255,255,255,.5);"><span class="c tw" style="top:2px"><span class="k">欧冠杯</span></span></div>
<div class="a" style="left:82px;top:601px;width:75px;height:25px;background:#ffffff;"><span class="c">25-08-06</span></div>
<div class="a" style="left:158px;top:601px;width:111px;height:25px;background:#ffffff;"><span class="c" style="color:#111"><span class="k">斯肯迪亚</span>(<span class="k">中</span>)</span></div>
<div class="a" style="left:398px;top:601px;width:111px;height:25px;background:#ffffff;"><span class="c" style="color:#0d700d"><span class="k">卡拉巴克</span></span></div>
<div class="a" style="left:270px;top:601px;width:89px;height:25px;background:#ffffff;"><span class="c"><span style="color:#cc1c1c">0-1</span>(0-1)</span></div>
<div class="a" style="left:360px;top:601px;width:37px;height:25px;background:#ffffff;"><span class="c">6-7</span></div>
<div class="a" style="left:510px;top:601px;width:47px;height:25px;background:#fef9f7;"><span class="c">0.90</span></div>
<div class="a" style="left:558px;top:601px;width:83px;height:25px;background:#fef9f7;"><span class="c"><span class="k">受半</span>/<span class="k">一</span></span></div>
<div class="a" style="left:642px;top:601px;width:51px;height:25px;background:#fef9f7;"><span class="c">0.99</span></div>
<div class="a" style="left:694px;top:601px;width:60px;height:25px;background:#eff8fb;"><span class="c">5.03</span></div>
<div class="a" style="left:755px;top:601px;width:60px;height:25px;background:#eff8fb;"><span class="c">3.69</span></div>
<div class="a" style="left:816px;top:601px;width:76px;height:25px;background:#eff8fb;"><span class="c">1.66</span></div>
<div class="a" style="left:893px;top:601px;width:37px;height:25px;background:#ffffff;"><span class="c" style="color:#cc1c1c"><span class="k">胜</span></span></div>
<div class="a" style="left:931px;top:601px;width:38px;height:25px;background:#ffffff;"><span class="c" style="color:#cc1c1c"><span class="k">赢</span></span></div>
<div class="a" style="left:970px;top:601px;width:58px;height:25px;background:#ffffff;"><span class="c" style="color:#1414c0"><span class="k">小</span></span></div>
<div class="a" style="left:0px;top:626px;width:82px;height:27px;background:#fb5200;box-shadow:inset 1px 1px 0 rgba(255,255,255,.5),inset -1px -1px 0 rgba(255,255,255,.5);"><span class="c tw" style="top:2px"><span class="k">欧冠杯</span></span></div>
<div class="a" style="left:82px;top:627px;width:75px;height:25px;background:#efefef;"><span class="c">25-07-31</span></div>
<div class="a" style="left:158px;top:627px;width:111px;height:25px;background:#efefef;"><span class="c" style="color:#0d700d"><span class="k">卡拉巴克</span></span></div>
<div class="a" style="left:398px;top:627px;width:111px;height:25px;background:#efefef;"><span class="c" style="color:#111"><span class="k">谢尔伯恩</span></span></div>
<div class="a" style="left:270px;top:627px;width:89px;height:25px;background:#efefef;"><span class="c"><span style="color:#cc1c1c">1-0</span>(1-0)</span></div>
<div class="a" style="left:360px;top:627px;width:37px;height:25px;background:#efefef;"><span class="c">4-2</span></div>
<div class="a" style="left:510px;top:627px;width:47px;height:25px;background:#fef9f7;"><span class="c">0.94</span></div>
<div class="a" style="left:558px;top:627px;width:83px;height:25px;background:#fef9f7;"><span class="c"><span class="k">两球</span></span></div>
<div class="a" style="left:642px;top:627px;width:51px;height:25px;background:#fef9f7;"><span class="c">0.88</span></div>
<div class="a" style="left:694px;top:627px;width:60px;height:25px;background:#eff8fb;"><span class="c">1.17</span></div>
<div class="a" style="left:755px;top:627px;width:60px;height:25px;background:#eff8fb;"><span class="c">6.63</span></div>
<div class="a" style="left:816px;top:627px;width:76px;height:25px;background:#eff8fb;"><span class="c">14.70</span></div>
<div class="a" style="left:893px;top:627px;width:37px;height:25px;background:#efefef;"><span class="c" style="color:#cc1c1c"><span class="k">胜</span></span></div>
<div class="a" style="left:931px;top:627px;width:38px;height:25px;background:#efefef;"><span class="c" style="color:#1414c0"><span class="k">输</span></span></div>
<div class="a" style="left:970px;top:627px;width:58px;height:25px;background:#efefef;"><span class="c" style="color:#1414c0"><span class="k">小</span></span></div>
<div class="a" style="left:0px;top:652px;width:82px;height:27px;background:#fb5200;box-shadow:inset 1px 1px 0 rgba(255,255,255,.5),inset -1px -1px 0 rgba(255,255,255,.5);"><span class="c tw" style="top:2px"><span class="k">欧冠杯</span></span></div>
<div class="a" style="left:82px;top:653px;width:75px;height:25px;background:#ffffff;"><span class="c">25-07-24</span></div>
<div class="a" style="left:158px;top:653px;width:111px;height:25px;background:#ffffff;"><span class="c" style="color:#111"><span class="k">谢尔伯恩</span></span></div>
<div class="a" style="left:398px;top:653px;width:111px;height:25px;background:#ffffff;"><span class="c" style="color:#0d700d"><span class="k">卡拉巴克</span></span></div>
<div class="a" style="left:270px;top:653px;width:89px;height:25px;background:#ffffff;"><span class="c"><span style="color:#cc1c1c">0-3</span>(0-1)</span></div>
<div class="a" style="left:360px;top:653px;width:37px;height:25px;background:#ffffff;"><span class="c">2-5</span></div>
<div class="a" style="left:510px;top:653px;width:47px;height:25px;background:#fef9f7;"><span class="c">0.85</span></div>
<div class="a" style="left:558px;top:653px;width:83px;height:25px;background:#fef9f7;"><span class="c"><span class="k">受一球</span></span></div>
<div class="a" style="left:642px;top:653px;width:51px;height:25px;background:#fef9f7;"><span class="c">0.97</span></div>
<div class="a" style="left:694px;top:653px;width:60px;height:25px;background:#eff8fb;"><span class="c">5.86</span></div>
<div class="a" style="left:755px;top:653px;width:60px;height:25px;background:#eff8fb;"><span class="c">4.06</span></div>
<div class="a" style="left:816px;top:653px;width:76px;height:25px;background:#eff8fb;"><span class="c">1.52</span></div>
<div class="a" style="left:893px;top:653px;width:37px;height:25px;background:#ffffff;"><span class="c" style="color:#cc1c1c"><span class="k">胜</span></span></div>
<div class="a" style="left:931px;top:653px;width:38px;height:25px;background:#ffffff;"><span class="c" style="color:#cc1c1c"><span class="k">赢</span></span></div>
<div class="a" style="left:970px;top:653px;width:58px;height:25px;background:#ffffff;"><span class="c" style="color:#cc1c1c"><span class="k">大</span></span></div>
<div class="a" style="left:0px;top:678px;width:82px;height:27px;background:#10a2a6;box-shadow:inset 1px 1px 0 rgba(255,255,255,.5),inset -1px -1px 0 rgba(255,255,255,.5);"><span class="c tw" style="top:2px"><span class="k">球会友谊</span></span></div>
<div class="a" style="left:82px;top:679px;width:75px;height:25px;background:#efefef;"><span class="c">25-07-16</span></div>
<div class="a" style="left:158px;top:679px;width:111px;height:25px;background:#efefef;"><span class="c" style="color:#111"><span class="k">萨尔茨堡</span>(<span class="k">中</span>)</span></div>
<div class="a" style="left:398px;top:679px;width:111px;height:25px;background:#efefef;"><span class="c" style="color:#0d700d"><span class="k">卡拉巴克</span></span></div>
<div class="a" style="left:270px;top:679px;width:89px;height:25px;background:#efefef;"><span class="c"><span style="color:#cc1c1c">2-1</span>(1-1)</span></div>
<div class="a" style="left:360px;top:679px;width:37px;height:25px;background:#efefef;"><span class="c">6-5</span></div>
<div class="a" style="left:510px;top:679px;width:47px;height:25px;background:#fef9f7;"><span class="c">0.86</span></div>
<div class="a" style="left:558px;top:679px;width:83px;height:25px;background:#fef9f7;"><span class="c"><span class="k">半</span>/<span class="k">一</span></span></div>
<div class="a" style="left:642px;top:679px;width:51px;height:25px;background:#fef9f7;"><span class="c">0.96</span></div>
<div class="a" style="left:694px;top:679px;width:60px;height:25px;background:#eff8fb;"><span class="c">1.72</span></div>
<div class="a" style="left:755px;top:679px;width:60px;height:25px;background:#eff8fb;"><span class="c">4.03</span></div>
<div class="a" style="left:816px;top:679px;width:76px;height:25px;background:#eff8fb;"><span class="c">3.82</span></div>
<div class="a" style="left:893px;top:679px;width:37px;height:25px;background:#efefef;"><span class="c" style="color:#1414c0"><span class="k">负</span></span></div>
<div class="a" style="left:931px;top:679px;width:38px;height:25px;background:#efefef;"><span class="c" style="color:#1414c0"><span class="k">输</span></span></div>
<div class="a" style="left:970px;top:679px;width:58px;height:25px;background:#efefef;"><span class="c" style="color:#1414c0"><span class="k">小</span></span></div>
<div class="a" style="left:1px;top:705px;width:1026px;height:25px;background:#ffffff;"><span class="c" style="letter-spacing:0.18px"><span class="k">近</span><span style="color:#cc1c1c">10</span><span class="k">场</span>,<span class="k">胜</span>6<span class="k">平</span>1<span class="k">负</span>3, <span class="k">胜率</span>:<span style="color:#cc1c1c">60%</span> <span class="k">让胜率</span>:<span style="color:#cc1c1c">50%</span> <span class="k">大率</span>:<span style="color:#cc1c1c">40%</span> <span class="k">单率</span>:<span style="color:#cc1c1c">60%</span></span></div>
<div class="sel" style="left:537px;top:55px;width:59px;"><span class="st" style="">Crow*</span><svg class="chev" width="10" height="7" viewBox="0 0 10 7"><path d="M1 1.2 L5 5.2 L9 1.2" fill="none" stroke="#000" stroke-width="2"/></svg></div>
<div class="sel" style="left:606px;top:55px;width:49px;"><span class="st" style="left:4px"><span class="k">终指</span></span><svg class="chev" width="10" height="7" viewBox="0 0 10 7"><path d="M1 1.2 L5 5.2 L9 1.2" fill="none" stroke="#000" stroke-width="2"/></svg></div>
<div class="sel" style="left:726px;top:55px;width:68px;"><span class="st" style="left:3.5px"><span class="k">平均值</span></span><svg class="chev" width="10" height="7" viewBox="0 0 10 7"><path d="M1 1.2 L5 5.2 L9 1.2" fill="none" stroke="#000" stroke-width="2"/></svg></div>
<div class="sel" style="left:804px;top:55px;width:49px;"><span class="st" style="left:4px"><span class="k">终指</span></span><svg class="chev" width="10" height="7" viewBox="0 0 10 7"><path d="M1 1.2 L5 5.2 L9 1.2" fill="none" stroke="#000" stroke-width="2"/></svg></div>
<div class="sel" style="left:934px;top:55px;width:49px;"><span class="st" style="left:3.5px"><span class="k">全场</span></span><svg class="chev" width="10" height="7" viewBox="0 0 10 7"><path d="M1 1.2 L5 5.2 L9 1.2" fill="none" stroke="#000" stroke-width="2"/></svg></div>
<div class="sel" style="left:541px;top:406px;width:59px;"><span class="st" style="">Crow*</span><svg class="chev" width="10" height="7" viewBox="0 0 10 7"><path d="M1 1.2 L5 5.2 L9 1.2" fill="none" stroke="#000" stroke-width="2"/></svg></div>
<div class="sel" style="left:610px;top:406px;width:49px;"><span class="st" style="left:4px"><span class="k">终指</span></span><svg class="chev" width="10" height="7" viewBox="0 0 10 7"><path d="M1 1.2 L5 5.2 L9 1.2" fill="none" stroke="#000" stroke-width="2"/></svg></div>
<div class="sel" style="left:729px;top:406px;width:67px;"><span class="st" style="left:3.5px"><span class="k">平均值</span></span><svg class="chev" width="10" height="7" viewBox="0 0 10 7"><path d="M1 1.2 L5 5.2 L9 1.2" fill="none" stroke="#000" stroke-width="2"/></svg></div>
<div class="sel" style="left:806px;top:406px;width:49px;"><span class="st" style="left:4px"><span class="k">终指</span></span><svg class="chev" width="10" height="7" viewBox="0 0 10 7"><path d="M1 1.2 L5 5.2 L9 1.2" fill="none" stroke="#000" stroke-width="2"/></svg></div>
<div class="sel" style="left:934px;top:406px;width:49px;"><span class="st" style="left:3.5px"><span class="k">全场</span></span><svg class="chev" width="10" height="7" viewBox="0 0 10 7"><path d="M1 1.2 L5 5.2 L9 1.2" fill="none" stroke="#000" stroke-width="2"/></svg></div>
</body></html>
